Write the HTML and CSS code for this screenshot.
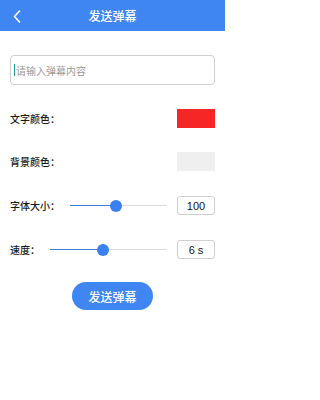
FILE: index.html
```html
<!DOCTYPE html>
<html lang="zh-CN">
<head>
<meta charset="utf-8">
<link rel="stylesheet" href="styles.css">
</head>
<body>
<header class="topbar">
  <svg class="back" width="8" height="13" viewBox="0 0 8 13"><path d="M6.5 1 L1.5 6.5 L6.5 12" fill="none" stroke="#fff" stroke-width="1.6" stroke-linecap="round" stroke-linejoin="round"/></svg>
  <h1 class="title">发送弹幕</h1>
</header>
<main class="content">
  <div class="input"><span class="caret"></span><span class="placeholder">请输入弹幕内容</span></div>
  <div class="row row-color">
    <span class="label">文字颜色：</span>
    <span class="swatch swatch-red"></span>
  </div>
  <div class="row row-color">
    <span class="label">背景颜色：</span>
    <span class="swatch swatch-gray"></span>
  </div>
  <div class="row row-slider">
    <span class="label">字体大小：</span>
    <div class="track"><div class="fill" style="width:47%"></div><span class="thumb" style="left:47%"></span></div>
    <span class="value">100</span>
  </div>
  <div class="row row-slider">
    <span class="label">速度：</span>
    <div class="track"><div class="fill" style="width:45%"></div><span class="thumb" style="left:45%"></span></div>
    <span class="value">6 s</span>
  </div>
  <div class="btn-wrap"><button class="send">发送弹幕</button></div>
</main>
</body>
</html>
```
FILE: styles.css
```css
* { box-sizing: border-box; }
body {
  margin: 0;
  width: 225px;
  height: 400px;
  background: #fff;
  font-family: "Noto Sans CJK SC", "Noto Sans", sans-serif;
  color: #222;
}
.topbar {
  height: 31px;
  background: #3f86f2;
  display: flex;
  align-items: center;
  justify-content: center;
  position: relative;
}
.back {
  position: absolute;
  left: 13px;
  top: 10px;
}
.title {
  margin: 0;
  font-size: 12px;
  font-weight: 500;
  color: #fff;
  line-height: 1;
}
.content {
  padding: 0 10px;
  display: flex;
  flex-direction: column;
}
.input {
  margin-top: 24px;
  height: 30px;
  width: 205px;
  border: 1px solid #cfcfcf;
  border-radius: 4px;
  display: flex;
  align-items: center;
  padding-left: 3px;
}
.caret {
  width: 1px;
  height: 12px;
  background: #1aa29a;
  margin-right: 1px;
}
.placeholder {
  font-size: 10px;
  color: #9a9a9a;
}
.row {
  display: flex;
  align-items: center;
  height: 19px;
  width: 205px;
}
.row-color {
  margin-top: 24px;
  justify-content: space-between;
}
.label {
  font-size: 10px;
  font-weight: 500;
  color: #1a1a1a;
  white-space: nowrap;
}
.swatch {
  width: 38px;
  height: 19px;
}
.swatch-red { background: #f42626; }
.swatch-gray { background: #efefef; }
.row-slider {
  margin-top: 25px;
}
.track {
  flex: 1;
  height: 1.5px;
  background: #dcdcdc;
  position: relative;
  margin: 0 10px;
}
.fill {
  height: 100%;
  background: #3f7fdf;
}
.thumb {
  position: absolute;
  top: 50%;
  width: 12px;
  height: 12px;
  margin: -6px 0 0 -6px;
  border-radius: 50%;
  background: #3a80ee;
}
.value {
  width: 38px;
  height: 19px;
  border: 1px solid #cfcfcf;
  border-radius: 3px;
  font-family: "Liberation Sans", Arial, sans-serif;
  font-size: 11px;
  color: #111;
  display: flex;
  align-items: center;
  justify-content: center;
}
.btn-wrap {
  margin-top: 23px;
  display: flex;
  justify-content: center;
  width: 205px;
}
.send {
  width: 81px;
  height: 28px;
  border: none;
  border-radius: 14px;
  background: #3f86f2;
  color: #fff;
  font-family: "Noto Sans CJK SC", sans-serif;
  font-size: 12px;
  font-weight: 500;
  padding: 0;
}
```
